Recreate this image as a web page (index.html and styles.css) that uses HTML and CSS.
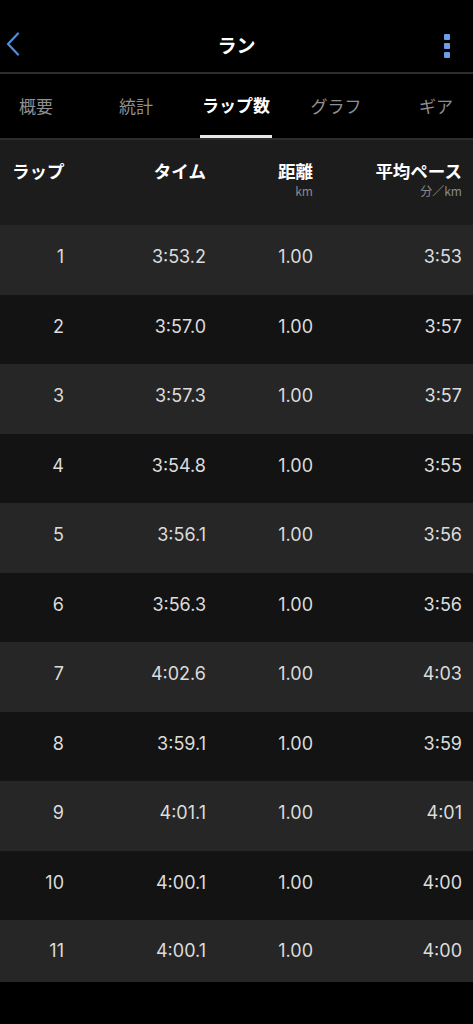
FILE: index.html
```html
<!DOCTYPE html>
<html lang="ja">
<head>
<meta charset="utf-8">
<link rel="stylesheet" href="styles.css">
</head>
<body>
<header class="topbar">
  <svg class="back" width="14" height="24" viewBox="0 0 14 24"><path d="M12 1.5 L2 12 L12 22.5" fill="none" stroke="#4f8fe3" stroke-width="2.2" stroke-linecap="round" stroke-linejoin="round"/></svg>
  <div class="title">ラン</div>
  <div class="kebab"><span></span><span></span><span></span></div>
</header>
<nav class="tabs">
  <div class="tab">概要</div>
  <div class="tab">統計</div>
  <div class="tab active"><span>ラップ数</span></div>
  <div class="tab">グラフ</div>
  <div class="tab">ギア</div>
</nav>
<section class="table">
  <div class="row head">
    <div class="c1 lbl">ラップ</div>
    <div class="c2"><div class="lbl">タイム</div></div>
    <div class="c3"><div class="lbl">距離</div><div class="sub">km</div></div>
    <div class="c4"><div class="lbl">平均ペース</div><div class="sub">分／km</div></div>
  </div>
  <div class="row odd"><div class="c1">1</div><div class="c2">3:53.2</div><div class="c3">1.00</div><div class="c4">3:53</div></div>
  <div class="row even"><div class="c1">2</div><div class="c2">3:57.0</div><div class="c3">1.00</div><div class="c4">3:57</div></div>
  <div class="row odd"><div class="c1">3</div><div class="c2">3:57.3</div><div class="c3">1.00</div><div class="c4">3:57</div></div>
  <div class="row even"><div class="c1">4</div><div class="c2">3:54.8</div><div class="c3">1.00</div><div class="c4">3:55</div></div>
  <div class="row odd"><div class="c1">5</div><div class="c2">3:56.1</div><div class="c3">1.00</div><div class="c4">3:56</div></div>
  <div class="row even"><div class="c1">6</div><div class="c2">3:56.3</div><div class="c3">1.00</div><div class="c4">3:56</div></div>
  <div class="row odd"><div class="c1">7</div><div class="c2">4:02.6</div><div class="c3">1.00</div><div class="c4">4:03</div></div>
  <div class="row even"><div class="c1">8</div><div class="c2">3:59.1</div><div class="c3">1.00</div><div class="c4">3:59</div></div>
  <div class="row odd"><div class="c1">9</div><div class="c2">4:01.1</div><div class="c3">1.00</div><div class="c4">4:01</div></div>
  <div class="row even"><div class="c1">10</div><div class="c2">4:00.1</div><div class="c3">1.00</div><div class="c4">4:00</div></div>
  <div class="row odd last"><div class="c1">11</div><div class="c2">4:00.1</div><div class="c3">1.00</div><div class="c4">4:00</div></div>
</section>
</body>
</html>
```
FILE: styles.css
```css
html, body {
  margin: 0;
  padding: 0;
  background: #000;
  width: 473px;
  height: 1024px;
  overflow: hidden;
  font-family: Inter, "Noto Sans CJK JP", sans-serif;
  color: #fff;
}
.topbar {
  height: 72px;
  display: flex;
  align-items: flex-start;
  justify-content: space-between;
  padding: 0 23px 0 6px;
  border-bottom: 2px solid #2c2c2c;
  position: relative;
}
.back { display: block; margin-top: 32px; }
.title {
  position: absolute;
  left: 0;
  right: 0;
  text-align: center;
  font-family: "Noto Sans CJK JP", sans-serif;
  font-weight: 700;
  font-size: 19px;
  top: 32px;
  line-height: 26px;
  pointer-events: none;
}
.kebab {
  display: flex;
  flex-direction: column;
  gap: 3px;
  margin-top: 34px;
}
.kebab span {
  width: 6px;
  height: 6px;
  border-radius: 1px;
  background: #6b9fe6;
}
.tabs {
  display: flex;
  height: 64px;
  margin-left: -14px;
  border-bottom: 2px solid #2c2c2c;
}
.tab {
  flex: 0 0 100px;
  display: flex;
  justify-content: center;
  align-items: stretch;
  font-family: "Noto Sans CJK JP", sans-serif;
  font-size: 17px;
  color: #8f8f8f;
  line-height: 64px;
}
.tab.active span {
  color: #fff;
  font-weight: 700;
  border-bottom: 3px solid #e8e8e8;
  line-height: 61px;
  width: 72px;
  text-align: center;
}
.table { display: flex; flex-direction: column; }
.row {
  display: grid;
  grid-template-columns: 64px 142px 107px 149px;
  padding-right: 11px;
  padding-bottom: 6px;
  box-sizing: border-box;
  height: 69.5px;
  align-items: center;
  text-align: right;
  font-size: 18px;
  color: #dcdcdc;
  white-space: nowrap;
}
.row.odd { background: #262626; }
.row.even { background: #131313; }
.row.last { height: 61.5px; padding-bottom: 0; }
.row.head {
  background: #1c1c1c;
  height: 85px;
  align-items: start;
  padding-bottom: 0;
}
.head .lbl {
  font-family: "Noto Sans CJK JP", sans-serif;
  font-weight: 700;
  font-size: 17.5px;
  color: #fff;
  line-height: 20px;
  margin-top: 21px;
}
.head .c1 { text-align: left; padding-left: 12px; }
.head .sub {
  font-family: "Noto Sans CJK JP", sans-serif;
  font-size: 12px;
  color: #8a8a8a;
  line-height: 14px;
  margin-top: 3px;
}
```
